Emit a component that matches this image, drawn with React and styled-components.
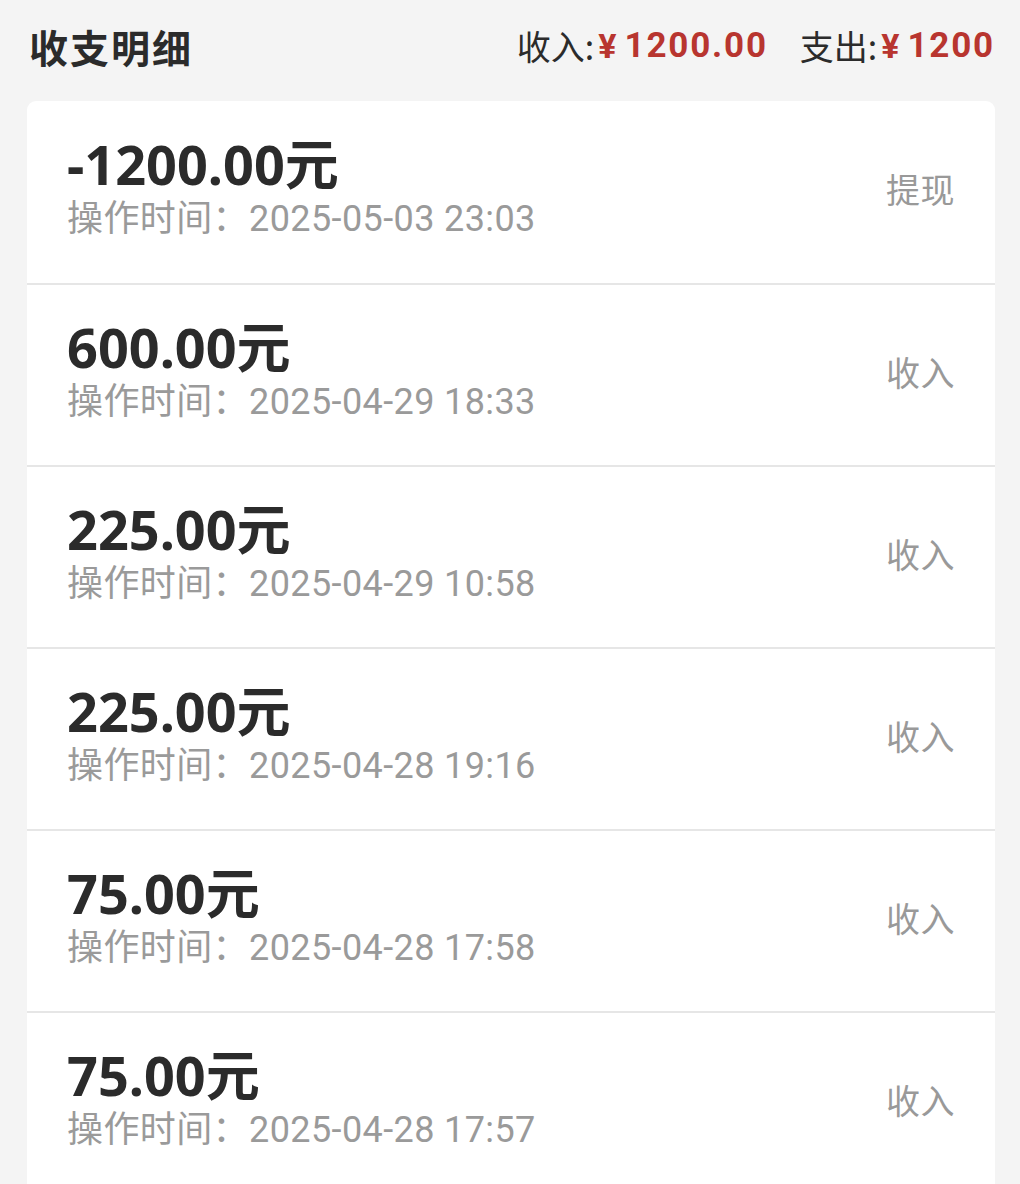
import styled, { createGlobalStyle } from 'styled-components';

const GlobalStyle = createGlobalStyle`
  body {
    margin: 0;
    background: #f4f4f4;
    font-family: "Noto Sans", "Noto Sans CJK SC", sans-serif;
  }
`;

const Page = styled.div`
  width: 1020px;
  height: 1184px;
  overflow: hidden;
  background: #f4f4f4;
`;

const Header = styled.div`
  height: 101px;
  display: flex;
  align-items: flex-start;
  justify-content: space-between;
  padding: 0 25px 0 29px;
  box-sizing: border-box;
`;

const Title = styled.h1`
  margin: 24px 0 0;
  font-family: "Noto Sans CJK SC", sans-serif;
  font-size: 39px;
  line-height: 44px;
  font-weight: 700;
  letter-spacing: 2px;
  color: #2b2b2b;
`;

const Summary = styled.div`
  margin-top: 25px;
  display: flex;
  align-items: center;
  gap: 32px;
`;

const SummaryItem = styled.span`
  display: flex;
  align-items: center;
  line-height: 42px;
  color: #2b2b2b;
`;

const SummaryLabel = styled.span`
  font-family: "Noto Sans CJK SC", sans-serif;
  font-size: 34px;
`;

const Yen = styled.span`
  font-family: Roboto, sans-serif;
  font-size: 34px;
  font-weight: 700;
  color: #b8352f;
  margin: 0 8px 0 4px;
`;

const SummaryValue = styled.span`
  font-family: Roboto, sans-serif;
  font-size: 35px;
  font-weight: 700;
  color: #b8352f;
  letter-spacing: 1.8px;
`;

const Card = styled.div`
  margin: 0 25px 0 27px;
  background: #fff;
  border-radius: 9px 9px 0 0;
  overflow: hidden;
`;

const Row = styled.div`
  height: 182px;
  display: flex;
  align-items: center;
  justify-content: space-between;
  padding: 0 40px;
  box-sizing: border-box;
  border-top: ${p => (p.$first ? 'none' : '2px solid #e6e6e6')};
`;

const Info = styled.div`
  display: flex;
  flex-direction: column;
  padding-bottom: 2px;
`;

const Amount = styled.div`
  font-family: "Noto Sans", "Noto Sans CJK SC", sans-serif;
  font-size: 54px;
  line-height: 56px;
  font-weight: 700;
  color: #2b2b2b;
`;

const Time = styled.div`
  font-family: Roboto, "Noto Sans CJK SC", sans-serif;
  font-size: 36px;
  line-height: 54px;
  color: #9a9a9a;
  letter-spacing: 0.4px;
`;

const Type = styled.div`
  font-family: "Noto Sans CJK SC", sans-serif;
  font-size: 34px;
  color: #999;
  letter-spacing: 0.5px;
  padding-bottom: 8px;
`;

const records = [
  { amount: '-1200.00元', time: '2025-05-03 23:03', type: '提现' },
  { amount: '600.00元', time: '2025-04-29 18:33', type: '收入' },
  { amount: '225.00元', time: '2025-04-29 10:58', type: '收入' },
  { amount: '225.00元', time: '2025-04-28 19:16', type: '收入' },
  { amount: '75.00元', time: '2025-04-28 17:58', type: '收入' },
  { amount: '75.00元', time: '2025-04-28 17:57', type: '收入' },
];

export default function App() {
  return (
    <Page>
      <GlobalStyle />
      <Header>
        <Title>收支明细</Title>
        <Summary>
          <SummaryItem>
            <SummaryLabel>收入:</SummaryLabel>
            <Yen>¥</Yen>
            <SummaryValue>1200.00</SummaryValue>
          </SummaryItem>
          <SummaryItem>
            <SummaryLabel>支出:</SummaryLabel>
            <Yen>¥</Yen>
            <SummaryValue>1200</SummaryValue>
          </SummaryItem>
        </Summary>
      </Header>
      <Card>
        {records.map((r, i) => (
          <Row key={i} $first={i === 0}>
            <Info>
              <Amount>{r.amount}</Amount>
              <Time>操作时间：{r.time}</Time>
            </Info>
            <Type>{r.type}</Type>
          </Row>
        ))}
      </Card>
    </Page>
  );
}
